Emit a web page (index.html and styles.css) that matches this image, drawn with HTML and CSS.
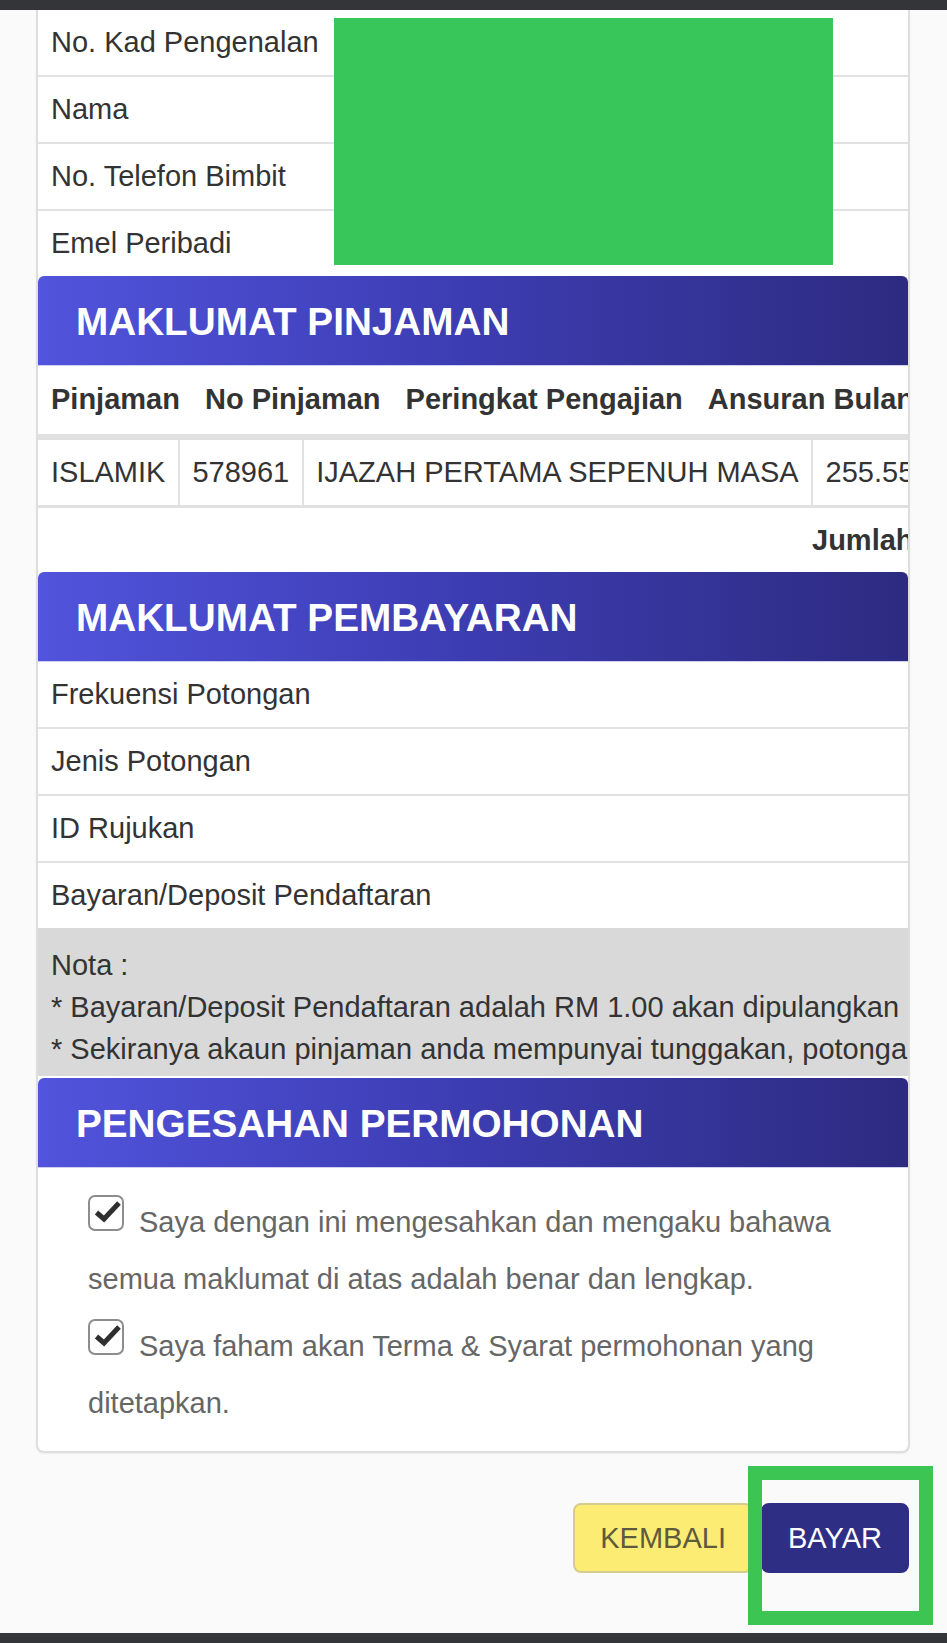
FILE: index.html
```html
<!DOCTYPE html>
<html lang="ms">
<head>
<meta charset="utf-8">
<title>Pengesahan Pembayaran</title>
<link rel="stylesheet" href="styles.css">
</head>
<body>
<div class="topbar"></div>
<main class="page">
  <section class="card">
    <div class="info-row info-first">No. Kad Pengenalan</div>
    <div class="info-row">Nama</div>
    <div class="info-row">No. Telefon Bimbit</div>
    <div class="info-row info-last">Emel Peribadi</div>

    <h2 class="band">MAKLUMAT PINJAMAN</h2>
    <div class="table-clip">
      <table class="loan-head">
        <tr><th>Pinjaman</th><th>No Pinjaman</th><th>Peringkat Pengajian</th><th>Ansuran Bulanan</th></tr>
      </table>
      <table class="loan-body">
        <tr><td>ISLAMIK</td><td>578961</td><td>IJAZAH PERTAMA SEPENUH MASA</td><td>255.55</td></tr>
      </table>
      <div class="total">Jumlah</div>
    </div>

    <h2 class="band">MAKLUMAT PEMBAYARAN</h2>
    <div class="info-row">Frekuensi Potongan</div>
    <div class="info-row">Jenis Potongan</div>
    <div class="info-row">ID Rujukan</div>
    <div class="info-row info-last">Bayaran/Deposit Pendaftaran</div>
    <div class="nota">
      <div class="nota-line">Nota :</div>
      <div class="nota-line">* Bayaran/Deposit Pendaftaran adalah RM 1.00 akan dipulangkan</div>
      <div class="nota-line">* Sekiranya akaun pinjaman anda mempunyai tunggakan, potongan akan dibuat</div>
    </div>

    <h2 class="band">PENGESAHAN PERMOHONAN</h2>
    <div class="confirm">
      <p class="check-line"><span class="cb"><svg viewBox="0 0 36 36" width="36" height="36"><rect x="1" y="1" width="34" height="34" rx="6" ry="6" fill="#fff" stroke="#8d8d8d" stroke-width="2"/><path d="M8.5 17.5 L16 24 L31 8" fill="none" stroke="#2f2f2f" stroke-width="5" stroke-linejoin="miter"/></svg></span>Saya dengan ini mengesahkan dan mengaku bahawa semua maklumat di atas adalah benar dan lengkap.</p>
      <p class="check-line"><span class="cb"><svg viewBox="0 0 36 36" width="36" height="36"><rect x="1" y="1" width="34" height="34" rx="6" ry="6" fill="#fff" stroke="#8d8d8d" stroke-width="2"/><path d="M8.5 17.5 L16 24 L31 8" fill="none" stroke="#2f2f2f" stroke-width="5" stroke-linejoin="miter"/></svg></span>Saya faham akan Terma &amp; Syarat permohonan yang ditetapkan.</p>
    </div>
  </section>

  <div class="actions">
    <button class="btn btn-back" type="button">KEMBALI</button>
    <button class="btn btn-pay" type="button">BAYAR</button>
  </div>
</main>
<div class="redact"></div>
<div class="highlight"></div>
<div class="bottombar"></div>
</body>
</html>
```

FILE: styles.css
```css
* { box-sizing: border-box; }

html, body {
  margin: 0;
  padding: 0;
}

body {
  background: #fafafa;
  font-family: "Liberation Sans", Arial, Helvetica, sans-serif;
  font-size: 29px;
  color: #333;
  position: relative;
  width: 947px;
  overflow: hidden;
}

.topbar {
  height: 10px;
  background: #343538;
}

.bottombar {
  height: 10px;
  background: #343538;
}

.page {
  padding-left: 36px;
}

.card {
  width: 874px;
  background: #fff;
  border: 2px solid #dedede;
  border-top: 0;
  border-radius: 0 0 8px 8px;
  box-shadow: 0 1px 2px rgba(0, 0, 0, 0.06);
  overflow: hidden;
}

.info-row {
  padding: 12px 13px;
  line-height: 41px;
  border-bottom: 2px solid #e2e2e2;
  white-space: nowrap;
}

.info-last {
  border-bottom: 0;
}

.band {
  margin: 0;
  height: 90px;
  padding: 1px 38px 0;
  display: flex;
  align-items: center;
  font-size: 38.7px;
  font-weight: bold;
  color: #fff;
  border-radius: 6px 6px 0 0;
  background: linear-gradient(90deg, #5154dc 0%, #3e3eb6 45%, #2d2b80 100%);
  box-shadow: inset 0 -1px 0 #cfd0ef;
}

.table-clip {
  overflow: hidden;
  width: 100%;
}

.loan-head,
.loan-body {
  border-collapse: collapse;
  white-space: nowrap;
}

.loan-head {
  width: 100%;
  border-bottom: 6px solid #e0e0e0;
}

.loan-head th {
  text-align: left;
  font-weight: bold;
  padding: 13px 12.5px 14px;
  line-height: 41px;
  width: 1%;
}

.loan-head th:first-child,
.loan-body td:first-child {
  padding-left: 13px;
}

.loan-head th:last-child {
  width: auto;
}

.loan-body td {
  padding: 12px 12.5px;
  line-height: 41px;
  border-left: 2px solid #e2e2e2;
  border-bottom: 3px solid #e0e0e0;
}

.loan-body td:first-child {
  border-left: 0;
}

.total {
  padding: 12px 0 11px 774px;
  line-height: 41px;
  font-weight: bold;
  white-space: nowrap;
}

.nota {
  background: #d9d9d9;
  padding: 16px 13px 6px;
  margin-bottom: 2px;
  white-space: nowrap;
  overflow: hidden;
}

.nota-line {
  line-height: 42px;
}

.confirm {
  padding: 26px 50px 19px;
}

.check-line {
  margin: 0;
  line-height: 57px;
  color: #666;
}

.check-line + .check-line {
  margin-top: 10px;
}

.cb {
  display: inline-block;
  width: 36px;
  height: 36px;
  vertical-align: top;
  margin-top: 1px;
  margin-right: 15px;
}

.cb svg {
  display: block;
}

.actions {
  width: 874px;
  display: flex;
  justify-content: flex-end;
  gap: 8px;
  margin-top: 50px;
  margin-bottom: 60px;
  padding-right: 1px;
}

.btn {
  height: 70px;
  padding: 0 25px;
  border: 2px solid;
  border-radius: 8px;
  font-family: "Liberation Sans", Arial, Helvetica, sans-serif;
  font-size: 29px;
}

.btn-back {
  background: #fdec74;
  border-color: #d6cc8e;
  color: #5e5a3e;
}

.btn-pay {
  background: #2f2e85;
  border-color: #2f2e85;
  color: #fff;
}

.redact {
  position: absolute;
  left: 334px;
  top: 18px;
  width: 499px;
  height: 247px;
  background: #38c65b;
}

.highlight {
  position: absolute;
  left: 748px;
  top: 1466px;
  width: 185px;
  height: 159px;
  border: 14px solid #3cc553;
}
```
